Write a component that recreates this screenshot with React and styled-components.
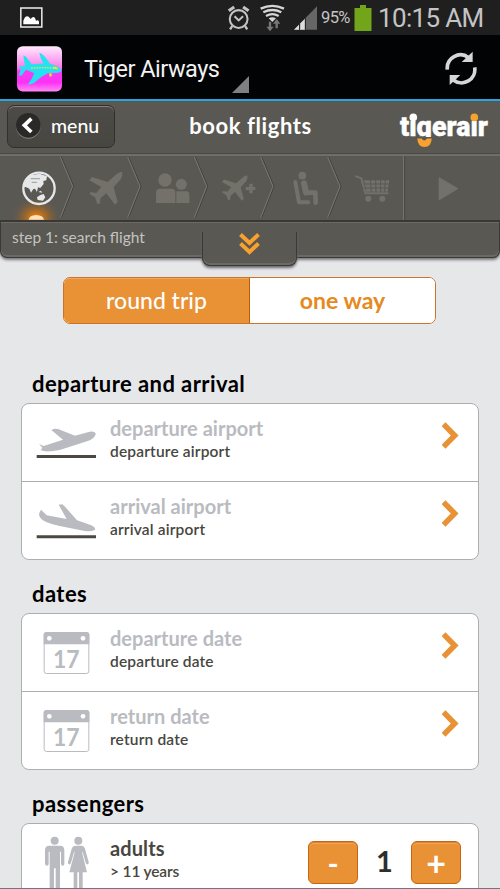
import React from "react";
import styled, { createGlobalStyle } from "styled-components";

const Global = createGlobalStyle`
  * { box-sizing: border-box; }
  html, body { margin: 0; padding: 0; overflow: hidden; background: #e6e7e9; }
  svg { display: block; flex: none; }
`;

const Screen = styled.div`
  width: 500px;
  height: 889px;
  overflow: hidden;
  background: #e6e7e9;
  border-bottom: 1px solid #77757a;
  font-family: Lato, "Open Sans", sans-serif;
  display: flex;
  flex-direction: column;
`;

const Label = styled.span`
  display: block;
  white-space: nowrap;
  font-size: ${(p) => p.$size}px;
  line-height: ${(p) => p.$line || 22}px;
  font-weight: ${(p) => p.$weight || 600};
  color: ${(p) => p.$color || "#000"};
  letter-spacing: ${(p) => p.$track || 0}px;
`;

const Gap = styled.div`
  flex: none;
  width: ${(p) => p.$w}px;
`;
const Spacer = styled.div`
  flex: 1;
`;

/* ---------- Android chrome ---------- */
const StatusBar = styled.div`
  flex: none;
  height: 35px;
  background: #1f1f1f;
  display: flex;
  align-items: center;
  padding: 0 16px 0 20px;
  font-family: Roboto, sans-serif;
  color: #c4c4c4;
`;
const Percent = styled.span`
  font-size: 16.5px;
  width: 33px;
  letter-spacing: -0.6px;
  line-height: 37px;
`;
const Clock = styled.span`
  font-size: 26px;
  line-height: 36px;
  width: 106px;
  white-space: nowrap;
  letter-spacing: -0.65px;
`;
const ActionBar = styled.div`
  flex: none;
  height: 66px;
  background: #020304;
  border-bottom: 2px solid #2ba6dc;
  display: flex;
  align-items: center;
  padding: 4px 22px 0 17px;
`;
const AppName = styled.span`
  font: 400 23.5px/34px Roboto, sans-serif;
  color: #f2f2f2;
  width: 148px;
  margin-left: 22px;
  white-space: nowrap;
  letter-spacing: -0.5px;
`;
const CornerSlot = styled.div`
  align-self: flex-end;
  padding-bottom: 6px;
`;

/* ---------- Header ---------- */
const Header = styled.div`
  flex: none;
  height: 55px;
  background: #5a5853;
  border-bottom: 2px solid #706e67;
  box-shadow: inset 0 -1px #4b4944;
  display: grid;
  grid-template-columns: 118px 1fr 118px;
  padding: 4px 11px 0 7px;
`;
const MenuButton = styled.div`
  width: 108px;
  height: 43px;
  border: 1px solid #32302d;
  border-radius: 7px;
  background: linear-gradient(#4d4b47, #484641);
  box-shadow: inset 0 1px #85837e;
  display: flex;
  align-items: center;
  padding: 0 0 1px 7px;
  gap: 9px;
`;
const Title = styled.div`
  display: flex;
  justify-content: center;
  padding: 10px 0 0 5px;
`;
const LogoSlot = styled.div`
  display: flex;
  justify-content: flex-end;
  padding-top: 5px;
`;

const Steps = styled.div`
  flex: none;
  display: flex;
  height: 64px;
  background: #5a5853;
`;
const Detail = styled.div`
  flex: none;
  height: 38px;
  background: #5a5853;
  border: 1px solid #3b3935;
  border-top: 2px solid #3a3834;
  border-radius: 0 0 7px 7px;
  box-shadow: inset 0 1px #6c6a64, inset 0 -2px #6c6a64, 0 2px 3px #77757a;
  display: flex;
  justify-content: space-between;
  padding-left: 11px;
`;
const StepLabel = styled.div`
  width: 190px;
  padding-top: 4px;
`;
const PullTab = styled.div`
  width: 95px;
  height: 44px;
  margin-right: 202px;
  background: #5a5853;
  border: 1px solid #3b3935;
  border-top: 0;
  border-radius: 0 0 8px 8px;
  box-shadow: inset 0 -2px #6c6a64, 0 2px 3px #66646a;
  clip-path: inset(10px -4px -6px -4px);
  display: flex;
  justify-content: center;
  padding-top: 11px;
`;

/* ---------- Form ---------- */
const Form = styled.div`
  flex: none;
  padding: 19px 21px 0;
  display: flex;
  flex-direction: column;
`;
const Toggle = styled.div`
  width: 373px;
  height: 47px;
  margin: 0 auto 0 42px;
  border: 1px solid #c9742a;
  border-radius: 7px;
  background: #fff;
  display: grid;
  grid-template-columns: 186px 1fr;
  overflow: hidden;
`;
const Choice = styled.div`
  display: flex;
  justify-content: center;
  padding-top: 11px;
  background: ${(p) => (p.$on ? "#e89135" : "#fff")};
  border-right: ${(p) => (p.$on ? "1px solid #bd5c0c" : "0")};
  box-shadow: ${(p) => (p.$on ? "inset 0 1px #f0a95f" : "none")};
`;
const Heading = styled.div`
  height: ${(p) => p.$h}px;
  padding: 0 0 8px 11px;
  display: flex;
  align-items: flex-end;
`;
const Card = styled.div`
  width: 458px;
  background: #fff;
  border: 1px solid #aeaeae;
  border-radius: 8px;
`;
const Row = styled.div`
  height: 77px;
  display: grid;
  grid-template-columns: 88px 1fr auto;
  padding-right: 17px;
  & + & { border-top: 1px solid #aeaeae; height: 78px; }
`;
const Words = styled.div`
  padding-top: 13px;
  display: grid;
  grid-template-rows: 23px 22px;
`;
const Stepper = styled.div`
  display: grid;
  grid-template-columns: 50px 53px 50px;
  padding-top: 17px;
`;
const StepButton = styled.div`
  height: 43px;
  width: 50px;
  border: 1px solid #c96510;
  border-radius: 6px;
  background: #e89135;
  box-shadow: inset 0 1px #dc842f, inset 0 2px #f0a65a;
  display: flex;
  align-items: center;
  justify-content: center;
`;
const Count = styled.div`
  display: flex;
  justify-content: center;
  padding-top: 3px;
`;

/* ---------- Icons ---------- */
const Picture = () => (
  <svg width="23" height="21" viewBox="61 22 69 63">
    <rect x="63.500" y="25" width="63" height="57" fill="#1f1f1f" stroke="#eee" strokeWidth="4.500" />
    <path d="M71 74V63q6-17 16-12l6 7q7-10 13-3l3 8q9-3 9 4v7z" fill="#fff" />
  </svg>
);
const Alarm = () => (
  <svg width="24" height="26" viewBox="683 17 70 76" fill="none" stroke="#c4c4c4">
    <circle cx="717" cy="58" r="26" strokeWidth="6" />
    <path d="M688 34l16-11M746 34l-16-11" strokeWidth="9" />
    <path d="M698 79l-6 9M736 79l6 9" strokeWidth="7" />
    <path d="M705 50l12 12 13-12" strokeWidth="6" />
  </svg>
);
const Wifi = () => (
  <svg width="25" height="28" viewBox="29 12 75 84" fill="none" stroke="#d6d6d6" strokeWidth="7">
    <path d="M31 26q35-17 70 0M39 37q27-14 54 0M47 48q19-11 38 0" />
    <path d="M55 55q11-6 22 0l-11 11z" fill="#d6d6d6" stroke="none" />
    <path d="M59 65v22M79 85V65" stroke="#777" strokeWidth="7" />
    <path d="M48 80h22L59 94zM68 71h22L79 57z" fill="#777" stroke="none" />
  </svg>
);
const Signal = () => (
  <svg width="23" height="24" viewBox="132 22 69 72">
    <path d="M132 93L201 23V93z" fill="#666" />
    <path d="M132 93l15-15v15zM150 93V75l3-3v21zM152 93V73l13-13v33z" fill="#dedede" />
    <path d="M149 76V93M166 59V93" stroke="#1f1f1f" strokeWidth="3" />
  </svg>
);
const Battery = () => (
  <svg width="18" height="26" viewBox="0 0 18 26" fill="#73a51b">
    <path d="M6 0h6v3h5.500v23H.5V3H6z" />
  </svg>
);
const AppIcon = () => (
  <svg width="45" height="46" viewBox="51 136 135 137">
    <defs>
      <linearGradient id="pink" x1="0" y1="0" x2="0" y2="1">
        <stop offset="0" stopColor="#ffeafd" />
        <stop offset=".48" stopColor="#fb7bea" />
        <stop offset=".55" stopColor="#f83df1" />
        <stop offset=".8" stopColor="#fc31f5" />
        <stop offset="1" stopColor="#ff8af3" />
      </linearGradient>
    </defs>
    <rect x="51" y="136" width="135" height="136" rx="17" fill="url(#pink)" />
    <path d="M70 163q8 2 12 10l13 17 35-2q-10-17-12-32 12 2 32 33 28 7 33 18 3 7-9 9l-30 1q-19 9-30 19-14 16-31 15 14-18 20-34l-25-11-13 18h-8q2-14 7-22l-9-7 20 2z" fill="#24e2f2" />
    <path d="M93 202q35-3 69 0" stroke="#d8e34c" strokeWidth="4" strokeDasharray="5 3" fill="none" />
    <path d="M160 197l11 2 3 7-14-2zM148 217h7v10h-7z" fill="#f4e21a" />
  </svg>
);
const Corner = () => (
  <svg width="17" height="17" viewBox="0 0 17 17"><path d="M17 0v17H0z" fill="#808080" /></svg>
);
const Refresh = () => (
  <svg width="34" height="36" viewBox="583 153 102 108" fill="none" stroke="#d6d6d6" strokeWidth="11">
    <path d="M593 209a40 40 0 0 1 64-36M675 202a40 40 0 0 1-64 38" />
    <path d="M669 155v31h-33zM600 255v-30h32z" fill="#d6d6d6" stroke="none" />
  </svg>
);
const Back = () => (
  <svg width="27" height="28" viewBox="44 46 81 84">
    <circle cx="84" cy="89" r="37" fill="#85837e" />
    <circle cx="84" cy="86" r="37" fill="#2a2927" />
    <path d="M93 66L72 86l21 20" fill="none" stroke="#fff" strokeWidth="11" />
  </svg>
);
const Logo = () => (
  <svg width="90" height="40" viewBox="399 110 90 40" overflow="visible">
    <text x="400" y="135.700" textLength="88" lengthAdjust="spacingAndGlyphs" fontFamily="Roboto, sans-serif" fontWeight="900" fontSize="28" fill="#fff" stroke="#fff" strokeWidth=".4">tigerair</text>
    <path d="M417 137h16v9h-16z" fill="#5a5853" />
    <path d="M408.500 112h9.500v8.600h-9.500zM469.500 112h9.500v8.600h-9.500z" fill="#5a5853" />
    <circle cx="413.300" cy="117.400" r="3.800" fill="#fff" />
    <circle cx="474.300" cy="117.400" r="3.800" fill="#f8a12f" />
    <path d="M417.300 138.400h4.300q2.700 4 5.400 0h4.700q-.4 8.400-7.200 8.600-6.800-.2-7.200-8.600z" fill="#f8a12f" />
  </svg>
);
const DoubleDown = () => (
  <svg width="21" height="22" viewBox="0 0 21 22" fill="none" stroke="#f8a12f" strokeWidth="4">
    <path d="M1.500 1.500l9 8.500 9-8.500M1.500 10.500l9 8.500 9-8.500" />
  </svg>
);
const Next = () => (
  <svg width="19" height="64" viewBox="0 0 19 64" fill="none" stroke="#e89135" strokeWidth="5.500">
    <path d="M1.500 20.200l11.200 11.300-11.200 11.300" />
  </svg>
);

const PLANE = "M366 68Q362 64 350 72L322 97 275 82 267 92 303 112 288 130 270 127 268 133 284 143 291 163 298 162 301 145 318 131 344 165 352 157 340 112 362 88Q368 76 366 68Z";

const stepCells = [
  {
    x: 0, w: 200, edge: "arrow",
    art: (
      <g>
        <ellipse cx="108" cy="206" rx="72" ry="62" fill="url(#glow)" />
        <circle cx="117" cy="116" r="47" fill="none" stroke="#e6e7e9" strokeWidth="7" />
        <path d="M78 88l16-12 25-4 22 8-2 12-9 2 1 9-10 12-7-2-3 14-6-10-5 1-7 11-5-12-11-5-7 1z" fill="#e6e7e9" />
        <path d="M111 143l10-7 10-3 5 10-7 10-16-2zM115 127l8-4 4 6zM139 154l3-3 1 5z" fill="#e6e7e9" />
        <path d="M92 87h28M95 98h16" stroke="#77756e" strokeWidth="2" />
        <path d="M86 210q2-13 22-14 22 1 24 14z" fill="#ffe0b8" />
      </g>
    ),
  },
  { x: 200, w: 201, edge: "arrow", art: <path d={PLANE} fill="#73716a" /> },
  {
    x: 401, w: 200, edge: "arrow",
    art: (
      <g fill="#73716a">
        <circle cx="494" cy="91" r="20" />
        <path d="M467 160v-31q0-12 12-12h34q12 0 12 12v31z" />
        <circle cx="543" cy="104" r="16.500" />
        <path d="M528 160v-35h29q10 0 10 10v25z" />
      </g>
    ),
  },
  {
    x: 601, w: 201, edge: "arrow",
    art: (
      <g fill="#73716a">
        <path d={PLANE} transform="translate(461.400 26.400) scale(.77)" />
        <path d="M749 102h10v10h8v9h-8v10h-10v-10h-11v-9h11z" />
      </g>
    ),
  },
  {
    x: 802, w: 201, edge: "arrow",
    art: (
      <g fill="none" stroke="#73716a" strokeLinecap="round" strokeLinejoin="round">
        <circle cx="908" cy="78" r="11.500" fill="#73716a" stroke="none" />
        <path d="M887 97l11 61h28" strokeWidth="12" />
        <path d="M914 103l6 26h27l1 30" strokeWidth="14" />
        <path d="M913 101l6 28" strokeWidth="18" />
      </g>
    ),
  },
  {
    x: 1003, w: 210, edge: "line",
    art: (
      <g fill="#73716a">
        <path d="M1069 80l16 6 12 45h67" fill="none" stroke="#73716a" strokeWidth="6" strokeLinecap="round" strokeLinejoin="round" />
        <path d="M1093 92h76l-5 34h-64z" />
        <path d="M1092 103h78M1092 115h78M1112 90l3 38M1128 90l1 38M1143 90v38M1157 90l-2 38" stroke="#5a5853" strokeWidth="3" />
        <circle cx="1106" cy="147" r="9" />
        <circle cx="1148" cy="147" r="9" />
      </g>
    ),
  },
  {
    x: 1213, w: 287, edge: null,
    art: <path d="M1319 85l54 32-54 32z" fill="#73716a" stroke="#73716a" strokeWidth="4" strokeLinejoin="round" />,
  },
];

const StepCell = ({ x, w, edge, art }) => (
  <svg width={w / 3} height="64" viewBox={`${x} 19 ${w} 192`} overflow="visible">
    <defs>
      <radialGradient id="glow">
        <stop offset="0" stopColor="#f08a10" />
        <stop offset=".35" stopColor="#d07412" stopOpacity=".75" />
        <stop offset="1" stopColor="#7a5c3c" stopOpacity="0" />
      </radialGradient>
      <clipPath id={`cell${x}`}><rect x={x} y="19" width={w} height="192" /></clipPath>
    </defs>
    <g clipPath={`url(#cell${x})`}>{art}</g>
    {edge === "arrow" && (
      <g fill="none" strokeWidth="3">
        <path d={`M${x + w - 16} 22l37 88-37 94`} stroke="#413f3a" />
        <path d={`M${x + w - 19} 22l37 88-37 94`} stroke="#7a7871" />
      </g>
    )}
    {edge === "line" && (
      <g strokeWidth="3">
        <path d={`M${x + w + 2} 19v192`} stroke="#413f3a" />
        <path d={`M${x + w - 1} 19v192`} stroke="#7a7871" />
      </g>
    )}
  </svg>
);

const Takeoff = () => (
  <svg width="88" height="77" viewBox="37 27 264 231" fill="#b9bbc0">
    <path d="M88 147l14 6 58-19-35-29 9-4 11 1 51 20 44-12q18-2 18 8-3 14-26 21l-82 26q-40 8-57 1l5-8z" />
    <path d="M81 180h178v9H81z" fill="#4b4942" />
  </svg>
);
const Landing = () => (
  <svg width="88" height="77" viewBox="37 260 264 231" fill="#b9bbc0">
    <path d="M88 355l6-12 17 17 60 11-24-43 11-1 8 7 36 41 43 15q13 6 11 13-11 7-31 4l-75-15q-50-10-60-27z" />
    <path d="M81 420h178v9H81z" fill="#4b4942" />
  </svg>
);
const Calendar = () => (
  <svg width="88" height="77" viewBox="37 117 264 231">
    <rect x="103.500" y="172.500" width="134" height="123" rx="7" fill="#fff" stroke="#b9bbc0" strokeWidth="3" />
    <path d="M102 208v-29q0-8 8-8h121q8 0 8 8v29z" fill="#b9bbc0" />
    <circle cx="119" cy="190" r="7" fill="#fff" />
    <circle cx="220" cy="190" r="7" fill="#fff" />
    <text x="130" y="278" textLength="80" lengthAdjust="spacingAndGlyphs" fontFamily="Lato, sans-serif" fontWeight="700" fontSize="72" fill="#b9bbc0">17</text>
  </svg>
);
const Couple = () => (
  <svg width="88" height="70" viewBox="37 117 264 210" fill="#b9bbc0">
    <circle cx="135" cy="167" r="12" />
    <path d="M119 182h32q12 0 13 12v42q0 6-5 6t-5-6v-36h-3v130h-13v-80h-5v80h-13V200h-3v36q0 6-5 6t-6-6v-42q1-12 13-12z" />
    <circle cx="206" cy="167" r="12" />
    <path d="M198 182h17q8 0 11 9l11 40q1 6-3 7t-6-5l-9-31h-2l15 60h-13v66h-11v-66h-5v66h-11v-66h-13l16-60h-2l-9 31q-2 6-6 5t-3-7l11-40q3-9 12-9z" />
  </svg>
);

const Field = ({ icon, name }) => (
  <Row>
    {icon}
    <Words>
      <Label $size={20} $weight={700} $color="#b9bbc0" $track={0.02}>{name}</Label>
      <Label $size={15.5} $color="#474640" $track={0.17}>{name}</Label>
    </Words>
    <Next />
  </Row>
);

const SectionTitle = ({ height, children }) => (
  <Heading $h={height}>
    <Label $size={22} $weight={700} $track={0.43}>{children}</Label>
  </Heading>
);

export default function App() {
  return (
    <Screen>
      <Global />
      <StatusBar>
        <Picture />
        <Spacer />
        <Alarm />
        <Gap $w={9} />
        <Wifi />
        <Gap $w={9} />
        <Signal />
        <Gap $w={4} />
        <Percent>95%</Percent>
        <Battery />
        <Gap $w={6} />
        <Clock>10:15 AM</Clock>
      </StatusBar>
      <ActionBar>
        <AppIcon />
        <AppName>Tiger Airways</AppName>
        <CornerSlot><Corner /></CornerSlot>
        <Spacer />
        <Refresh />
      </ActionBar>
      <Header>
        <MenuButton>
          <Back />
          <Label $size={19.5} $weight={500} $color="#fff">menu</Label>
        </MenuButton>
        <Title><Label $size={22} $weight={700} $color="#fff" $track={0.6}>book flights</Label></Title>
        <LogoSlot><Logo /></LogoSlot>
      </Header>
      <Steps>
        {stepCells.map((c) => <StepCell key={c.x} {...c} />)}
      </Steps>
      <Detail>
        <StepLabel><Label $size={15.5} $weight={400} $color="#c4c3c0">step 1: search flight</Label></StepLabel>
        <PullTab><DoubleDown /></PullTab>
      </Detail>
      <Form>
        <Toggle>
          <Choice $on><Label $size={23} $weight={500} $color="#fff">round trip</Label></Choice>
          <Choice><Label $size={23} $weight={700} $color="#e58a22">one way</Label></Choice>
        </Toggle>
        <SectionTitle height={79}>departure and arrival</SectionTitle>
        <Card>
          <Field icon={<Takeoff />} name="departure airport" />
          <Field icon={<Landing />} name="arrival airport" />
        </Card>
        <SectionTitle height={53}>dates</SectionTitle>
        <Card>
          <Field icon={<Calendar />} name="departure date" />
          <Field icon={<Calendar />} name="return date" />
        </Card>
        <SectionTitle height={53}>passengers</SectionTitle>
        <Card>
          <Row>
            <Couple />
            <Words>
              <Label $size={20} $weight={700} $color="#474640" $track={0.1}>adults</Label>
              <Label $size={15.5} $color="#474640" $track={-0.15}>&gt; 11 years</Label>
            </Words>
            <Stepper>
              <StepButton><Label $size={30} $weight={700} $color="#fff">-</Label></StepButton>
              <Count><Label $size={29} $line={34} $weight={700} $color="#2e2e2c">1</Label></Count>
              <StepButton><Label $size={34} $weight={700} $color="#fff">+</Label></StepButton>
            </Stepper>
          </Row>
        </Card>
      </Form>
    </Screen>
  );
}
